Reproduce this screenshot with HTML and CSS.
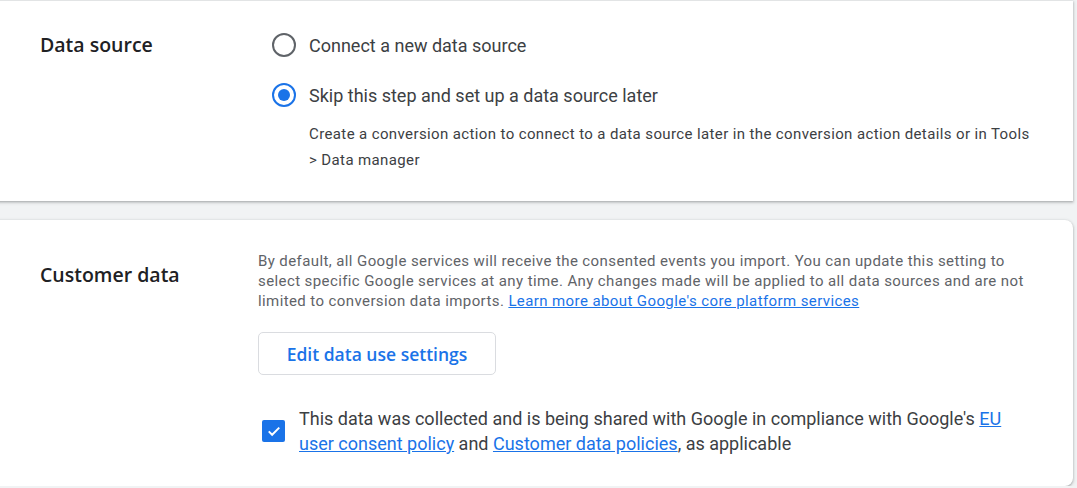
FILE: index.html
```html
<!DOCTYPE html>
<html lang="en">
<head>
    <meta charset="UTF-8">
    <meta name="viewport" content="width=device-width, initial-scale=1.0">
    <title>Conversion data</title>
    <link rel="stylesheet" href="styles.css">
</head>
<body>
    <div class="page">
        <section class="card card-source">
            <h2 class="card-title">Data source</h2>
            <div class="card-body">
                <label class="radio-row">
                    <span class="radio-box"><span class="radio"></span></span>
                    <span class="radio-label">Connect a new data source</span>
                </label>
                <label class="radio-row">
                    <span class="radio-box"><span class="radio checked"></span></span>
                    <span class="radio-label">Skip this step and set up a data source later</span>
                </label>
                <p class="radio-hint">Create a conversion action to connect to a data source later in the conversion action details or in Tools &gt; Data manager</p>
            </div>
        </section>

        <section class="card card-customer">
            <h2 class="card-title title-customer">Customer data</h2>
            <div class="card-body">
                <p class="info">By default, all Google services will receive the consented events you import. You can update this setting to select specific Google services at any time. Any changes made will be applied to all data sources and are not limited to conversion data imports. <a href="#">Learn more about Google's core platform services</a></p>
                <button class="outline-button">Edit data use settings</button>
                <label class="check-row">
                    <span class="checkbox">
                        <svg viewBox="0 0 24 24" width="18" height="18"><path d="M5 12.5l4.5 4.5L19 7.5" fill="none" stroke="#fff" stroke-width="2.6"/></svg>
                    </span>
                    <span class="check-label">This data was collected and is being shared with Google in compliance with Google's <a href="#">EU user consent policy</a> and <a href="#">Customer data policies</a>, as applicable</span>
                </label>
            </div>
        </section>
    </div>
</body>
</html>
```

FILE: styles.css
```css
:root {
    --page-bg: #f1f3f4;
    --title: #202124;
    --text: #3c4043;
    --muted: #5f6368;
    --blue: #1a73e8;
    --line: #dadce0;
}

* {
    margin: 0;
    padding: 0;
    box-sizing: border-box;
}

body {
    background: var(--page-bg);
    font-family: Roboto, "Liberation Sans", Arial, sans-serif;
    color: var(--text);
}

.page {
    display: flex;
    flex-direction: column;
    gap: 19px;
    padding-top: 1px;
}

.card {
    display: flex;
    background: #fff;
    margin-left: -10px;
    width: 1083px;
    padding-left: 50px;
    padding-right: 40px;
    box-shadow: 0 1px 2px rgba(60, 64, 67, 0.3), 0 1px 3px 1px rgba(60, 64, 67, 0.15);
}

.card-source {
    padding-top: 19px;
    padding-bottom: 28px;
    height: 200px;
}

.card-customer {
    border-radius: 8px;
    padding-top: 31px;
    padding-bottom: 28px;
    height: 266px;
}

.card-title {
    width: 218px;
    flex-shrink: 0;
    font-family: "Open Sans", Roboto, sans-serif;
    font-weight: 600;
    font-size: 19.5px;
    line-height: 50px;
    color: var(--title);
}

.title-customer {
    line-height: 28px;
    margin-top: 10px;
}

.card-body {
    flex: 1;
    display: flex;
    flex-direction: column;
    align-items: flex-start;
}

/* Radio group */
.radio-row {
    display: flex;
    align-items: center;
    height: 50px;
    cursor: pointer;
}

.radio-box {
    width: 51px;
    display: flex;
    justify-content: center;
}

.radio {
    width: 24px;
    height: 24px;
    border-radius: 50%;
    border: 2.5px solid var(--muted);
    display: flex;
    align-items: center;
    justify-content: center;
}

.radio.checked {
    border-color: var(--blue);
}

.radio.checked::after {
    content: "";
    width: 12px;
    height: 12px;
    border-radius: 50%;
    background: var(--blue);
}

.radio-label {
    font-size: 18px;
    color: var(--text);
}

.radio-hint {
    margin-top: 1px;
    margin-left: 51px;
    font-size: 15px;
    line-height: 26px;
    letter-spacing: 0.38px;
    color: var(--text);
}

/* Customer data */
.info {
    font-size: 15px;
    line-height: 20px;
    letter-spacing: 0.4px;
    color: var(--muted);
}

a {
    color: var(--blue);
}

.outline-button {
    margin-top: 21px;
    width: 238px;
    height: 43px;
    background: #fff;
    border: 1px solid var(--line);
    border-radius: 5px;
    color: var(--blue);
    font-family: "Open Sans", Roboto, sans-serif;
    font-weight: 600;
    font-size: 17.5px;
    cursor: pointer;
}

.check-row {
    margin-top: 31px;
    display: flex;
    align-items: center;
}

.checkbox {
    width: 23px;
    height: 22px;
    margin-left: 4px;
    margin-right: 14px;
    flex-shrink: 0;
    background: var(--blue);
    border-radius: 2px;
    display: flex;
    align-items: center;
    justify-content: center;
}

.check-label {
    font-size: 18px;
    line-height: 25px;
    color: var(--text);
}
```
